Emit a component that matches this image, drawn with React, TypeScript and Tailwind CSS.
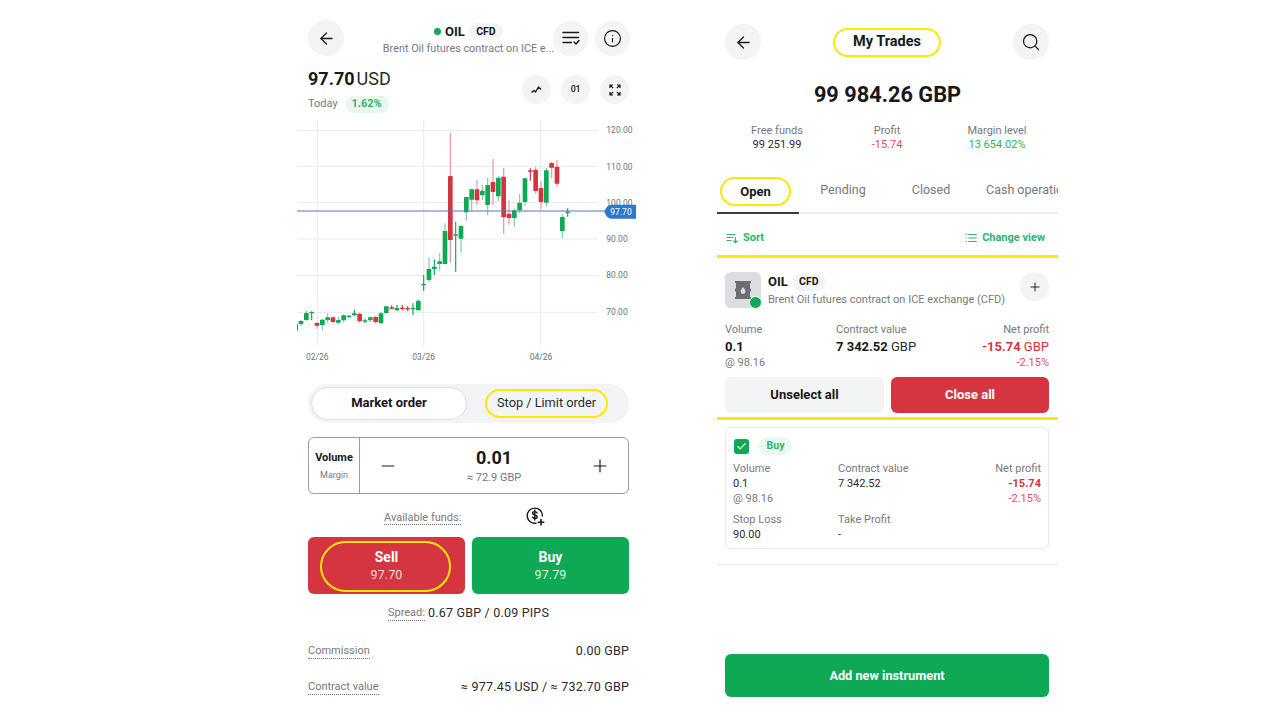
import React from "react";
import { ArrowLeft, Info, Search, Plus, Minus, Check } from "lucide-react";

type C = [number, number, number, number, number, "g" | "r"];
const candles: C[] = [
  [-4,608,612,632,636,"g"],[12,600,603,612,618,"g"],[28,571,579,600,603,"g"],[44,574,576,580,600,"g"],[60,607,609,617,626,"r"],[76,596,599,615,630,"g"],[92,580,592,600,608,"g"],[108,589,592,606,610,"r"],[124,590,600,608,614,"g"],[140,583,586,601,607,"g"],[156,585,587,591,593,"g"],[172,569,580,586,588,"g"],[188,578,581,604,608,"r"],[204,596,601,604,610,"g"],[220,589,592,601,605,"g"],[236,587,591,606,611,"r"],[252,576,580,610,611,"g"],[268,557,559,579,581,"g"],[284,556,562,564,568,"r"],[300,554,564,571,572,"g"],[316,556,563,565,571,"r"],[332,559,564,566,574,"r"],[348,550,564,566,585,"g"],[364,538,542,571,572,"g"],[380,465,492,495,513,"g"],[396,412,447,480,486,"g"],[412,418,440,447,465,"g"],[428,400,424,432,452,"g"],[444,310,333,432,432,"g"],[460,38,168,360,428,"r"],[476,305,343,345,455,"g"],[492,315,318,356,398,"g"],[508,231,231,277,302,"g"],[524,207,208,239,272,"g"],[540,180,208,241,254,"r"],[556,195,212,226,240,"g"],[572,173,195,255,286,"g"],[588,117,186,216,255,"r"],[604,168,174,229,243,"g"],[620,144,170,292,341,"r"],[636,241,281,294,314,"r"],[652,266,271,294,321,"g"],[668,222,248,271,280,"g"],[684,174,175,246,258,"g"],[700,145,151,154,182,"r"],[716,140,149,213,221,"r"],[732,184,204,246,267,"r"],[748,144,151,248,260,"g"],[764,126,129,143,174,"r"],[780,120,140,191,200,"r"],[796,282,291,333,354,"g"],[812,265,275,278,290,"g"],
];

const Chart = () => (
  <svg viewBox="0 0 1035 780" className="w-[345px] h-[260px] block shrink-0">
    <g stroke="#e9eaec" strokeWidth="3">
      {[31, 139, 248, 357, 466, 577].map((y) => <line key={y} x1="0" x2="903" y1={y} y2={y} />)}
      {[61, 380, 731].map((x) => <line key={x} x1={x} x2={x} y1="0" y2="676" />)}
    </g>
    {candles.map(([x, h, t, b, l, c]) => {
      const col = c === "g" ? "#0fa956" : "#d43540";
      const wick = c === "g" ? "#7fcda2" : "#e3949a";
      return (
        <g key={x}>
          <line x1={x} x2={x} y1={h} y2={l} stroke={b - t < 8 ? col : wick} strokeWidth="3.5" />
          <rect x={x - 7} y={t} width="14" height={Math.max(b - t, 4)} rx="1.5" fill={col} />
        </g>
      );
    })}
    <g fill="#6f7177" fontFamily="Roboto, sans-serif" fontSize="25.5">
      <text x="928" y="40">120.00</text>
      <text x="928" y="149">110.00</text>
      <text x="928" y="257">100.00</text>
      <text x="928" y="367">90.00</text>
      <text x="928" y="475">80.00</text>
      <text x="928" y="586">70.00</text>
      <text x="27" y="719">02/26</text>
      <text x="346" y="719">03/26</text>
      <text x="698" y="719">04/26</text>
    </g>
    <line x1="0" x2="925" y1="273" y2="273" stroke="#5a76b5" strokeWidth="3" />
    <path d="M942 254H1017V296H942Q930 296 922 275Q930 254 942 254Z" fill="#2a78cf" />
    <text x="940" y="284" fill="#fff" fontFamily="Roboto, sans-serif" fontSize="25.5">97.70</text>
  </svg>
);

const Round = ({ className = "", children }: { className?: string; children: React.ReactNode }) => (
  <div className={`flex items-center justify-center rounded-full bg-[#f3f4f6] shrink-0 text-[#17181a] ${className}`}>{children}</div>
);

const Dotted = ({ children }: { children: React.ReactNode }) => (
  <span className="text-[11px] text-[#77797e] border-b border-dotted border-[#77797e] leading-[14px]">{children}</span>
);

const CfdPill = () => (
  <span className="flex items-center justify-center h-[17px] w-[34px] rounded-full bg-[#f3f4f6] text-[10.5px] font-bold text-[#17181a]">CFD</span>
);

const LeftPanel = () => (
  <div className="w-[343px] shrink-0 flex flex-col">
    <div className="px-[11px] pt-[20px]">
      <div className="flex items-center h-[36px] relative mr-[-1px]">
        <Round className="w-[36px] h-[36px]"><ArrowLeft size={19} strokeWidth={1.6} /></Round>
        <div className="flex-1 flex flex-col items-center min-w-0 mt-[3px] pl-[40px]">
          <div className="flex items-center h-[17px]">
            <span className="w-[7px] h-[7px] rounded-full bg-[#0fa956] mr-[4px]" />
            <span className="text-[13px] font-bold text-[#17181a] mr-[4px]">OIL</span>
            <CfdPill />
          </div>
          <div className="text-[10.85px] text-[#77797e] whitespace-nowrap mt-[2px] h-[14px] leading-[14px]">Brent Oil futures contract on ICE e...</div>
        </div>
        <Round className="w-[35px] h-[35px]">
          <svg width="20" height="20" viewBox="0 0 20 20" fill="none" stroke="#17181a" strokeWidth="1.4" strokeLinecap="round" strokeLinejoin="round">
            <path d="M2 4.500h15.500M2 9.500h15.500M2 14.500h8.500M13 14l2 2 3-3.500" />
          </svg>
        </Round>
        <Round className="w-[35px] h-[35px] ml-[7px]"><Info size={19} strokeWidth={1.5} /></Round>
      </div>
      <div className="flex items-start justify-between mt-[10px] h-[56px]">
        <div className="flex flex-col">
          <div className="flex items-baseline h-[26px] leading-[26px] text-[#17181a] text-[18px]">
            <span className="font-bold">97.70</span>
            <span className="ml-[2px] text-[#2a2b2e]">USD</span>
          </div>
          <div className="flex items-center mt-[4px] h-[17px]">
            <span className="text-[11px] text-[#77797e]">Today</span>
            <span className="ml-[7px] flex items-center justify-center w-[44px] h-[17px] rounded-full bg-[#e9f7ef] text-[#2fb36c] text-[11px] font-bold">1.62%</span>
          </div>
        </div>
        <div className="flex gap-[10px] mt-[9px]">
          <Round className="w-[29px] h-[29px]">
            <svg width="12" height="9" viewBox="0 0 12 9" fill="none" stroke="#17181a" strokeWidth="1.4" strokeLinejoin="round"><path d="M0.500 7.500l2.500-2 1.500 1.500 3-5 1.500 1.500 1 1" /></svg>
          </Round>
          <Round className="w-[29px] h-[29px] text-[9px] font-medium tracking-[-0.3px]">01</Round>
          <Round className="w-[29px] h-[29px]">
            <svg width="12" height="12" viewBox="0 0 12 12" fill="none" stroke="#17181a" strokeWidth="1.2">
              <path d="M1 4V1h3M1 1l3.200 3.200M8 1h3v3M11 1L7.800 4.200M1 8v3h3M1 11l3.200-3.200M8 11h3V8M11 11L7.800 7.800" />
            </svg>
          </Round>
        </div>
      </div>
    </div>
    <div className="-mt-[2px]"><Chart /></div>
    <div className="px-[11px] mt-[4px] flex flex-col">
      <div className="flex items-center h-[39px] rounded-full bg-[#f3f4f6] px-[3px]">
        <div className="flex items-center justify-center w-[156px] h-[33px] pb-[1px] rounded-full bg-white border border-[#dcdde0] text-[13px] font-bold text-[#17181a]">Market order</div>
        <div className="ml-[18px] flex items-center justify-center w-[123px] h-[29px] pb-[1px] rounded-full border-[2px] border-[#ffe800] text-[12.75px] text-[#2a2b2e]">Stop / Limit order</div>
      </div>
      <div className="mt-[14px] flex h-[57px] rounded-[6px] border border-[#9a9ca0]">
        <div className="w-[51px] border-r border-[#9a9ca0] flex flex-col items-center justify-center">
          <span className="text-[11px] font-bold text-[#17181a] leading-[14px]">Volume</span>
          <span className="text-[9px] text-[#77797e] leading-[12px] mt-[4px]">Margin</span>
        </div>
        <div className="flex-1 flex items-center justify-between pl-[18px] pr-[18px]">
          <Minus size={20} strokeWidth={1.4} color="#17181a" />
          <div className="flex flex-col items-center">
            <span className="text-[18px] font-bold leading-[22px] text-[#17181a]">0.01</span>
            <span className="text-[11px] leading-[14px] text-[#77797e] mt-[2px]">≈ 72.9 GBP</span>
          </div>
          <Plus size={20} strokeWidth={1.4} color="#17181a" />
        </div>
      </div>
      <div className="flex items-center h-[20px] mt-[12px] relative">
        <div className="ml-[76px]"><Dotted>Available funds:</Dotted></div>
        <svg className="ml-[64px]" width="20" height="20" viewBox="0 0 20 20" fill="none" stroke="#17181a" strokeWidth="1.4" strokeLinecap="round">
          <path d="M11 17.200A7.600 7.600 0 1 1 17.400 10" />
          <path d="M12 6.800c-.5-.9-1.300-1.200-2.200-1.200-1.200 0-2.200.6-2.200 1.700 0 2.300 4.600 1.100 4.600 3.400 0 1.100-1 1.800-2.300 1.800-1 0-1.900-.4-2.400-1.300M9.800 4v10" />
          <path d="M16 13.500v5.500M13.200 16.200h5.600" strokeWidth="1.6" />
        </svg>
      </div>
      <div className="flex gap-[7px] mt-[11px]">
        <div className="relative flex-1 h-[57px] rounded-[6px] bg-[#d43540] text-white flex flex-col items-center justify-center">
          <span className="text-[14px] font-bold leading-[18px]">Sell</span>
          <span className="text-[12.5px] tracking-[0.1px] leading-[16px] mt-[1px] text-[#f6dcde]">97.70</span>
          <span className="absolute left-[12px] top-[4px] w-[131px] h-[51px] rounded-full border-[2px] border-[#ffe800]" />
        </div>
        <div className="flex-1 h-[57px] rounded-[6px] bg-[#0fa956] text-white flex flex-col items-center justify-center">
          <span className="text-[14px] font-bold leading-[18px]">Buy</span>
          <span className="text-[12.5px] tracking-[0.1px] leading-[16px] mt-[1px] text-[#d9f2e4]">97.79</span>
        </div>
      </div>
      <div className="flex items-center justify-center h-[16px] mt-[11px] text-[12.5px] tracking-[0.2px] text-[#2a2b2e]">
        <span className="tracking-normal flex"><Dotted>Spread:</Dotted></span><span className="ml-[3px]">0.67 GBP / 0.09 PIPS</span>
      </div>
      <div className="flex items-center justify-between h-[16px] mt-[22px] text-[12.5px] tracking-[0.2px] text-[#2a2b2e]">
        <span className="tracking-normal flex"><Dotted>Commission</Dotted></span><span>0.00 GBP</span>
      </div>
      <div className="flex items-center justify-between h-[16px] mt-[20px] text-[12.5px] tracking-[0.2px] text-[#2a2b2e]">
        <span className="tracking-normal flex"><Dotted>Contract value</Dotted></span><span>≈ 977.45 USD / ≈ 732.70 GBP</span>
      </div>
    </div>
  </div>
);

const Stat = ({ label, value, tone }: { label: string; value: string; tone: string }) => (
  <div className="w-[108px] flex flex-col items-center text-[11px] leading-[14px]">
    <span className="text-[#77797e]">{label}</span>
    <span className={tone}>{value}</span>
  </div>
);

const RightPanel = () => (
  <div className="w-[341px] shrink-0 flex flex-col">
    <div className="pl-[8px] pr-[9px] pt-[24px] flex items-center justify-between">
      <Round className="w-[36px] h-[36px]"><ArrowLeft size={19} strokeWidth={1.6} /></Round>
      <div className="flex items-center justify-center w-[108px] h-[29px] rounded-full border-[2px] border-[#ffe800] text-[14.5px] font-bold text-[#17181a]">My Trades</div>
      <Round className="w-[36px] h-[36px]"><Search size={20} strokeWidth={1.5} /></Round>
    </div>
    <div className="text-center text-[21.75px] font-bold text-[#17181a] leading-[28px] mt-[21px]">99 984.26 GBP</div>
    <div className="flex justify-between px-[7px] mt-[15px] pl-[6px]">
      <Stat label="Free funds" value="99 251.99" tone="text-[#2a2b2e]" />
      <Stat label="Profit" value="-15.74" tone="text-[#d9535c]" />
      <Stat label="Margin level" value="13 654.02%" tone="text-[#2fb36c]" />
    </div>
    <div className="flex mt-[25px] h-[37px] text-[12.5px] text-[#77797e]">
      <div className="w-[82px] shrink-0 flex justify-start pl-[3px] border-b-[2px] border-[#3a3b3e]">
        <span className="flex items-center justify-center w-[71px] h-[29px] rounded-full border-[2px] border-[#ffe800] text-[13px] font-bold text-[#17181a]">Open</span>
      </div>
      <div className="w-[88px] shrink-0 flex justify-center pt-[4px] border-b-[2px] border-[#ecedef]">Pending</div>
      <div className="w-[88px] shrink-0 flex justify-center pt-[4px] border-b-[2px] border-[#ecedef]">Closed</div>
      <div className="flex-1 min-w-0 overflow-hidden pl-[11px] pt-[4px] whitespace-nowrap border-b-[2px] border-[#ecedef]">Cash operations</div>
    </div>
    <div className="flex items-center justify-between h-[44px] border-b-[3px] border-[#ffe800] pl-[9px] pr-[13px] pt-[7px] text-[11px] font-bold text-[#2fb36c]">
      <div className="flex items-center gap-[5px]">
        <svg width="12" height="12" viewBox="0 0 12 12" fill="none" stroke="#2fb36c" strokeWidth="1.2" strokeLinecap="round"><path d="M1 2.500h8M1 5.500h6M1 8.500h4M9.500 5.500v5M7.800 9l1.700 1.600L11.200 9" /></svg>
        Sort
      </div>
      <div className="flex items-center gap-[5px]">
        <svg width="12" height="12" viewBox="0 0 12 12" fill="none" stroke="#2fb36c" strokeWidth="1.2" strokeLinecap="round"><path d="M1 2.500h.3M1 6h.3M1 9.500h.3M3.800 2.500h7.500M3.800 6h7.500M3.800 9.500h7.500" /></svg>
        Change view
      </div>
    </div>
    <div className="pl-[8px] pr-[9px] pt-[14px]">
      <div className="flex items-center h-[36px]">
        <div className="relative w-[36px] h-[36px] rounded-[6px] bg-[#dcdde0] flex items-center justify-center">
          <svg width="18" height="20" viewBox="0 0 18 20">
            <path d="M1 1h16v2h-1v5.500h1v3h-1V17h1v2H1v-2h1v-5.500H1v-3h1V3H1z" fill="#6d6e72" />
            <path d="M9 7c1.500 2 2.500 3 2.500 4.500A2.500 2.500 0 0 1 6.500 11.500C6.500 10 7.500 9 9 7z" fill="#dcdde0" />
          </svg>
          <span className="absolute -right-[1px] -bottom-[1px] w-[11px] h-[11px] rounded-full bg-[#0fa956] border border-white box-content" />
        </div>
        <div className="ml-[7px] flex-1 flex flex-col">
          <div className="flex items-center h-[18px]">
            <span className="text-[13px] font-bold text-[#17181a] mr-[4px]">OIL</span>
            <CfdPill />
          </div>
          <span className="text-[11px] text-[#77797e] leading-[14px] mt-[2px]">Brent Oil futures contract on ICE exchange (CFD)</span>
        </div>
        <Round className="w-[29px] h-[29px] self-start"><Plus size={14} strokeWidth={1.6} /></Round>
      </div>
      <div className="flex mt-[15px]">
        <div className="w-[111px] flex flex-col">
          <span className="text-[11px] leading-[14px] text-[#77797e]">Volume</span>
          <span className="text-[13px] font-bold leading-[16px] mt-[2px] text-[#17181a]">0.1</span>
          <span className="text-[11px] leading-[14px] mt-[1px] text-[#77797e]">@ 98.16</span>
        </div>
        <div className="flex flex-col">
          <span className="text-[11px] leading-[14px] text-[#77797e]">Contract value</span>
          <span className="text-[13px] leading-[16px] mt-[2px] text-[#2a2b2e]"><b className="font-bold text-[#17181a]">7 342.52</b> GBP</span>
        </div>
        <div className="flex-1 flex flex-col items-end">
          <span className="text-[11px] leading-[14px] text-[#77797e]">Net profit</span>
          <span className="text-[13px] leading-[16px] mt-[2px] text-[#d43540]"><b className="font-bold">-15.74</b> GBP</span>
          <span className="text-[11px] leading-[14px] mt-[1px] text-[#d9535c]">-2.15%</span>
        </div>
      </div>
      <div className="flex gap-[7px] mt-[7px] text-[13px] font-bold">
        <div className="w-[159px] h-[36px] rounded-[6px] bg-[#f3f4f6] flex items-center justify-center text-[#17181a]">Unselect all</div>
        <div className="w-[158px] h-[36px] rounded-[6px] bg-[#d43540] flex items-center justify-center text-white">Close all</div>
      </div>
    </div>
    <div className="h-[3px] bg-[#ffe800] mt-[4px]" />
    <div className="pl-[8px] pr-[9px] pt-[7px]">
      <div className="h-[122px] rounded-[6px] border border-[#e9eaec] px-[7px] pt-[9px] flex flex-col text-[11px] leading-[14px]">
        <div className="flex items-center h-[18px] pl-[1px]">
          <span className="w-[15px] h-[15px] rounded-[3px] bg-[#0fa956] flex items-center justify-center"><Check size={11} strokeWidth={2.5} color="white" /></span>
          <span className="ml-[10px] w-[33px] h-[18px] rounded-full bg-[#e9f7ef] text-[#2fb36c] font-bold text-[10.5px] flex items-center justify-center">Buy</span>
        </div>
        <div className="flex mt-[7px]">
          <div className="w-[105px] flex flex-col gap-[1px]">
            <span className="text-[#77797e]">Volume</span>
            <span className="text-[#2a2b2e]">0.1</span>
            <span className="text-[#77797e]">@ 98.16</span>
          </div>
          <div className="flex flex-col gap-[1px]">
            <span className="text-[#77797e]">Contract value</span>
            <span className="text-[#2a2b2e]">7 342.52</span>
          </div>
          <div className="flex-1 flex flex-col items-end gap-[1px]">
            <span className="text-[#77797e]">Net profit</span>
            <span className="text-[#d43540] font-bold">-15.74</span>
            <span className="text-[#d9535c]">-2.15%</span>
          </div>
        </div>
        <div className="flex mt-[7px]">
          <div className="w-[105px] flex flex-col gap-[1px]">
            <span className="text-[#77797e]">Stop Loss</span>
            <span className="text-[#2a2b2e]">90.00</span>
          </div>
          <div className="flex flex-col gap-[1px]">
            <span className="text-[#77797e]">Take Profit</span>
            <span className="text-[#2a2b2e]">-</span>
          </div>
        </div>
      </div>
    </div>
    <div className="h-px bg-[#e9eaec] mt-[15px]" />
    <div className="pl-[8px] pr-[9px] mt-[89px]">
      <div className="h-[43px] rounded-[6px] bg-[#0fa956] flex items-center justify-center text-white text-[12.75px] font-bold">Add new instrument</div>
    </div>
  </div>
);

export default function App() {
  return (
    <div className="w-[1280px] h-[720px] bg-white overflow-hidden flex pl-[297px] gap-[77px] font-['Roboto',sans-serif]">
      <LeftPanel />
      <RightPanel />
    </div>
  );
}
